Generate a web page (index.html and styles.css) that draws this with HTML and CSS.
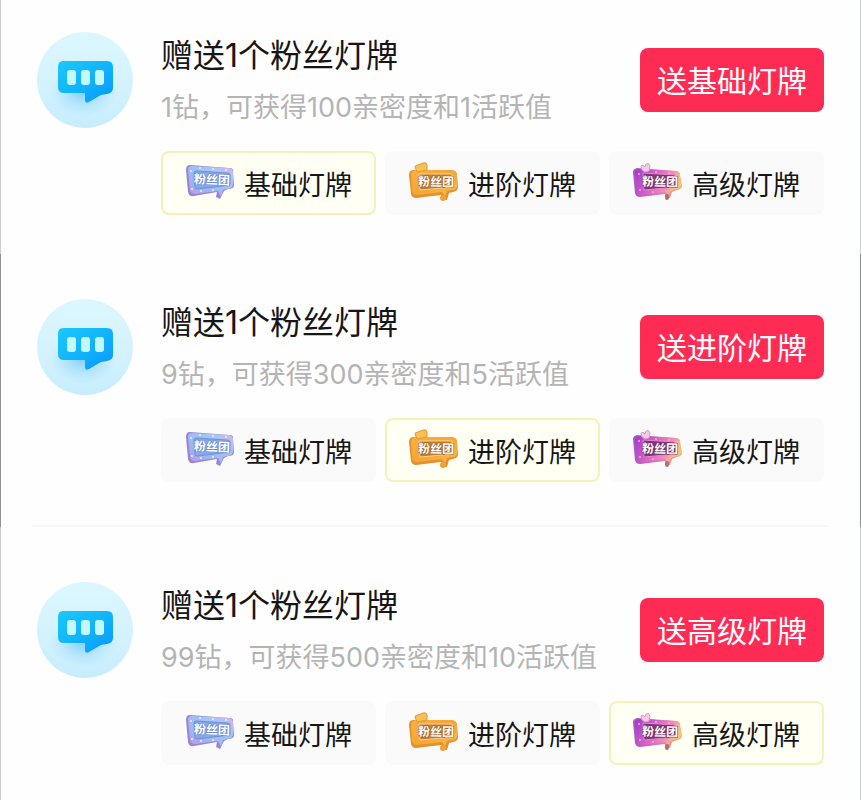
FILE: index.html
```html
<!DOCTYPE html>
<html lang="zh-CN">
<head>
<meta charset="utf-8">
<meta name="viewport" content="width=device-width, initial-scale=1">
<title>粉丝灯牌</title>
<link rel="stylesheet" href="styles.css">
</head>
<body>
<svg class="defs" width="0" height="0" aria-hidden="true">
  <defs>
    <linearGradient id="bubble" x1="0" y1="0" x2="1" y2="1"><stop offset="0" stop-color="#1cc8fa"/><stop offset=".55" stop-color="#10b2fb"/><stop offset="1" stop-color="#0794ff"/></linearGradient>
    <linearGradient id="disc" x1="0" y1="0" x2="0" y2="1"><stop offset="0" stop-color="#dcf7fe"/><stop offset=".6" stop-color="#d3f2fe"/><stop offset="1" stop-color="#c6edfd"/></linearGradient>
    <radialGradient id="glow"><stop offset="0" stop-color="#62c4f8" stop-opacity=".75"/><stop offset="1" stop-color="#9cdcfb" stop-opacity="0"/></radialGradient>
    <linearGradient id="blue" x1="0" y1="1" x2="1" y2="0"><stop offset="0" stop-color="#c993e6"/><stop offset=".3" stop-color="#9db4f0"/><stop offset=".7" stop-color="#a3c8f6"/><stop offset="1" stop-color="#dfb0ea"/></linearGradient>
    <linearGradient id="gold" x1="0" y1="0" x2="1" y2="1"><stop offset="0" stop-color="#f8b044"/><stop offset=".5" stop-color="#f5a634"/><stop offset="1" stop-color="#fbbc52"/></linearGradient>
    <linearGradient id="purple" x1="0" y1="0" x2="1" y2=".3"><stop offset="0" stop-color="#9a3bcb"/><stop offset=".5" stop-color="#dc65c6"/><stop offset=".8" stop-color="#ee8fb4"/><stop offset="1" stop-color="#fac27c"/></linearGradient>
    <linearGradient id="purple-edge"><stop offset="0" stop-color="#b04fc4"/><stop offset=".6" stop-color="#d97fbd"/><stop offset="1" stop-color="#efb078"/></linearGradient>
    <symbol id="chat" viewBox="0 0 96 96">
      <circle cx="48" cy="48" r="48" fill="url(#disc)"/>
      <ellipse cx="46" cy="60" rx="34" ry="25" fill="url(#glow)"/>
      <path d="M26 29H70Q76 29 76 35V56Q76 61 70 62L64 63L52 70Q48 72 48 68V61H27Q21 61 21 55V35Q21 29 26 29Z" fill="url(#bubble)"/>
      <g fill="#c5f7ff"><rect x="30" y="38" width="9" height="15" rx="3"/><rect x="44" y="38" width="9" height="15" rx="3"/><rect x="58" y="38" width="9" height="15" rx="3"/></g>
    </symbol>
    <symbol id="basic" viewBox="0 0 50 44">
      <path d="M5 4L44 7Q49 7 48 11L49 24Q49 28 43 28L39 30L35 38L31 36L32 31L9 35Q4 36 3 31L1 9Q1 4 5 4Z" fill="#9a84d4"/>
      <path d="M7 5L44 7Q48 8 48 11L48 23Q48 27 43 28L38 29L36 36L33 30L10 33Q6 33 5 29L3 9Q3 5 7 5Z" fill="url(#blue)"/>
      <path d="M11 10L42 12Q45 12 45 14V24L12 28Q10 28 10 26L9 12Q9 10 11 10Z" fill="#86a8e8" stroke="#6f90d8"/>
      <g fill="#dff4ff"><circle cx="6" cy="10" r="1"/><circle cx="7" cy="28" r="1"/><circle cx="15" cy="7" r="1"/><circle cx="28" cy="8" r="1"/><circle cx="41" cy="9" r="1"/><circle cx="16" cy="30" r="1"/><circle cx="28" cy="29" r="1"/></g>
      <text class="sign sign-blue" x="27" y="23" transform="rotate(2 27 19)">粉丝团</text>
    </symbol>
    <symbol id="gold-sign" viewBox="0 0 50 44">
      <path d="M5 9L43 9Q48 10 48 14L49 26Q49 30 44 31L40 32L38 39L33 39L32 34L7 37Q3 37 2 33L0 14Q0 9 5 9Z" fill="#e4912b"/>
      <path d="M7 9L43 9Q48 10 48 14V25Q48 29 43 29L38 30L36 35L33 31L8 34Q4 34 3 30L2 14Q2 10 7 9Z" fill="url(#gold)"/>
      <path d="M6 6Q6 4 9 4L14 2Q18 1 18 4L18 9L8 11Z" fill="#f9c057" stroke="#e09a30"/>
      <path d="M10 13L43 13L44 26L11 29Z" fill="#c07d35" stroke="#fbd48a"/>
      <ellipse cx="34" cy="37" rx="3" ry="3" fill="#efa039"/>
      <text class="sign sign-gold" x="27" y="25" transform="rotate(1 27 20)">粉丝团</text>
    </symbol>
    <symbol id="premium" viewBox="0 0 50 44">
      <path d="M4 7L43 10Q47 10 47 14L49 25Q49 28 44 29L39 31L37 37L32 37L32 33L7 36Q3 36 2 32L0 11Q0 8 4 7Z" fill="url(#purple-edge)"/>
      <path d="M7 8L43 10Q47 11 47 14L48 24Q48 28 43 28L38 30L35 34L32 31L9 34Q5 34 4 30L2 12Q2 8 7 8Z" fill="url(#purple)"/>
      <path d="M10 12L42 14L43 26L11 29Z" fill="#7c3974" stroke="#ef83ca"/>
      <path d="M8 5Q10 3 12 6L13 3Q16 1 17 5L16 10L12 11L9 9Z" fill="#f3cbe8" stroke="#d6a0cf"/>
      <g fill="#f5a6ed"><circle cx="6" cy="13" r="1"/><circle cx="7" cy="29" r="1"/><circle cx="23" cy="11" r="1"/><circle cx="36" cy="12" r="1"/><circle cx="20" cy="31" r="1"/></g>
      <ellipse cx="34" cy="36" rx="2" ry="3" fill="#b0706c"/>
      <text class="sign sign-purple" x="27" y="25" transform="rotate(1 27 20)">粉丝团</text>
    </symbol>
  </defs>
</svg>
<main>
  <section class="offer offer-first">
    <svg class="avatar" aria-hidden="true"><use href="#chat"/></svg>
    <div class="content">
      <div class="head">
        <div class="copy"><h2>赠送1个粉丝灯牌</h2><p>1钻，可获得100亲密度和1活跃值</p></div>
        <button class="send" type="button">送基础灯牌</button>
      </div>
      <div class="tiers">
        <button class="tier selected" type="button" aria-pressed="true"><svg aria-hidden="true"><use href="#basic"/></svg>基础灯牌</button>
        <button class="tier" type="button" aria-pressed="false"><svg aria-hidden="true"><use href="#gold-sign"/></svg>进阶灯牌</button>
        <button class="tier" type="button" aria-pressed="false"><svg aria-hidden="true"><use href="#premium"/></svg>高级灯牌</button>
      </div>
    </div>
  </section>
  <section class="offer offer-middle">
    <svg class="avatar" aria-hidden="true"><use href="#chat"/></svg>
    <div class="content">
      <div class="head">
        <div class="copy"><h2>赠送1个粉丝灯牌</h2><p>9钻，可获得300亲密度和5活跃值</p></div>
        <button class="send" type="button">送进阶灯牌</button>
      </div>
      <div class="tiers">
        <button class="tier" type="button" aria-pressed="false"><svg aria-hidden="true"><use href="#basic"/></svg>基础灯牌</button>
        <button class="tier selected" type="button" aria-pressed="true"><svg aria-hidden="true"><use href="#gold-sign"/></svg>进阶灯牌</button>
        <button class="tier" type="button" aria-pressed="false"><svg aria-hidden="true"><use href="#premium"/></svg>高级灯牌</button>
      </div>
    </div>
  </section>
  <hr>
  <section class="offer offer-last">
    <svg class="avatar" aria-hidden="true"><use href="#chat"/></svg>
    <div class="content">
      <div class="head">
        <div class="copy"><h2>赠送1个粉丝灯牌</h2><p>99钻，可获得500亲密度和10活跃值</p></div>
        <button class="send" type="button">送高级灯牌</button>
      </div>
      <div class="tiers">
        <button class="tier" type="button" aria-pressed="false"><svg aria-hidden="true"><use href="#basic"/></svg>基础灯牌</button>
        <button class="tier" type="button" aria-pressed="false"><svg aria-hidden="true"><use href="#gold-sign"/></svg>进阶灯牌</button>
        <button class="tier selected" type="button" aria-pressed="true"><svg aria-hidden="true"><use href="#premium"/></svg>高级灯牌</button>
      </div>
    </div>
  </section>
</main>
</body>
</html>
```
FILE: styles.css
```css
* { box-sizing: border-box; }
body {
  margin: 0;
  background: #fefefe;
  color: #161616;
  font-family: Inter, "Noto Sans CJK SC", sans-serif;
}
.defs { position: absolute; }
.offer {
  display: flex;
  gap: 28px;
  padding: 32px 36px 39px;
  border: solid #c9cccd;
  border-width: 0 1px;
}
.offer-middle { padding-top: 45px; padding-bottom: 45px; border-color: #8f9394; }
.offer-last { padding-top: 55px; padding-bottom: 35px; }
.avatar { flex: none; width: 96px; height: 96px; }
.content { flex: 1; min-width: 0; }
.head {
  display: flex;
  align-items: center;
  justify-content: space-between;
  height: 96px;
  margin-bottom: 23px;
}
.copy { padding-top: 4px; }
h2, p { margin: 0; white-space: nowrap; }
h2 { font-size: 32px; line-height: 44px; font-weight: 400; }
p { margin-top: 8px; font-size: 27px; line-height: 44px; font-weight: 400; color: #b4b4b4; }
button { font-family: inherit; white-space: nowrap; cursor: pointer; }
.send {
  flex: none;
  height: 64px;
  padding: 0 17px 2px;
  border: 0;
  border-radius: 8px;
  background: #fe2c55;
  color: #fff;
  font-size: 30px;
}
.tiers { display: grid; grid-template-columns: repeat(3, 1fr); gap: 9px; }
.tier {
  display: flex;
  align-items: center;
  justify-content: center;
  gap: 9px;
  height: 64px;
  padding: 0;
  border: 2px solid transparent;
  border-radius: 8px;
  background: #fafafa;
  color: #161616;
  font-size: 27px;
}
.tier svg { flex: none; width: 50px; height: 44px; }
.tier.selected { border-color: #f7f0b8; background: #fffff3; }
.sign {
  font-family: "Noto Sans CJK SC", sans-serif;
  font-size: 12px;
  font-weight: 700;
  text-anchor: middle;
  fill: #fff;
}
.sign-blue { stroke: #6584cd; stroke-width: 1px; paint-order: stroke; }
.sign-gold { stroke: #9c5b20; stroke-width: 1px; paint-order: stroke; }
.sign-purple { stroke: #762d60; stroke-width: 1px; paint-order: stroke; }
hr { height: 2px; margin: -2px 32px 0; border: 0; background: #f8f8f8; }
```
